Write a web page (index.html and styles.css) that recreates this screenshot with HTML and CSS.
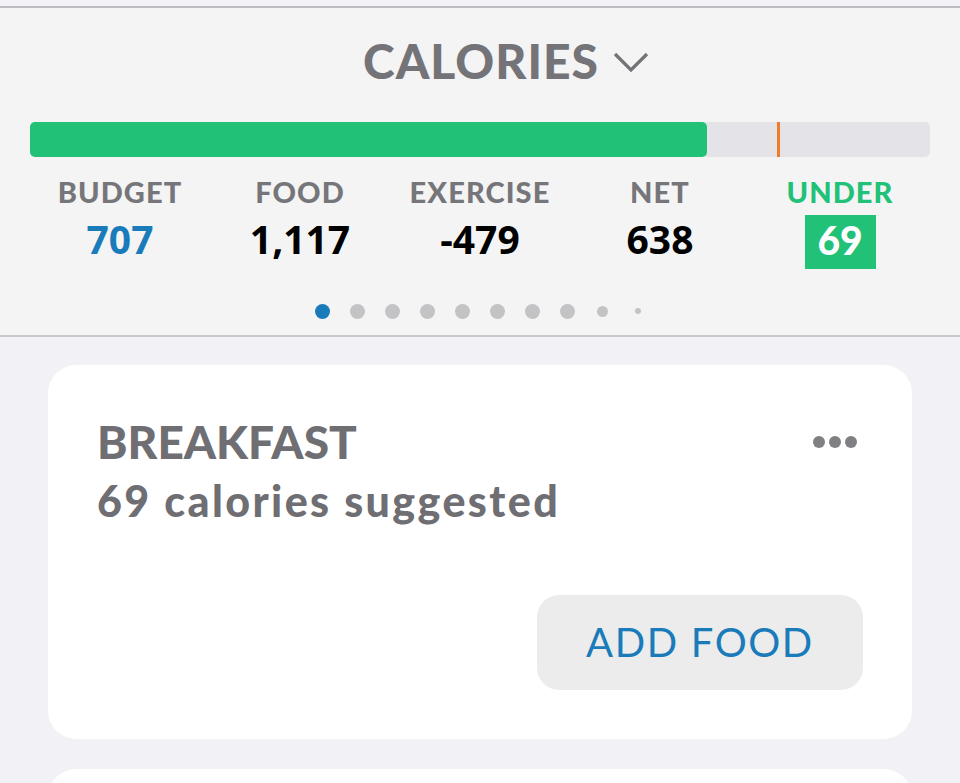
FILE: index.html
```html
<!DOCTYPE html>
<html>
<head>
<meta charset="utf-8">
<link rel="stylesheet" href="styles.css">
</head>
<body>
<div class="page">
  <div class="summary">
    <div class="title">CALORIES
      <svg class="chev" width="36" height="22" viewBox="0 0 36 22"><path d="M2 3 L18 19 L34 3" fill="none" stroke="#737378" stroke-width="3.2"/></svg>
    </div>
    <div class="bar">
      <div class="fill"></div>
      <div class="marker"></div>
    </div>
    <div class="stats">
      <div class="stat"><div class="label">BUDGET</div><div class="value blue">707</div></div>
      <div class="stat"><div class="label">FOOD</div><div class="value">1,117</div></div>
      <div class="stat"><div class="label">EXERCISE</div><div class="value">-479</div></div>
      <div class="stat"><div class="label">NET</div><div class="value">638</div></div>
      <div class="stat"><div class="label green">UNDER</div><div class="value"><span class="badge">69</span></div></div>
    </div>
    <div class="dots">
      <span class="cell"><i class="dot active"></i></span>
      <span class="cell"><i class="dot"></i></span>
      <span class="cell"><i class="dot"></i></span>
      <span class="cell"><i class="dot"></i></span>
      <span class="cell"><i class="dot"></i></span>
      <span class="cell"><i class="dot"></i></span>
      <span class="cell"><i class="dot"></i></span>
      <span class="cell"><i class="dot"></i></span>
      <span class="cell"><i class="dot small"></i></span>
      <span class="cell"><i class="dot tiny"></i></span>
    </div>
  </div>
  <div class="content">
    <div class="card">
      <div class="card-head">
        <div class="meal">BREAKFAST</div>
        <div class="more"><i></i><i></i><i></i></div>
      </div>
      <div class="suggest">69 calories suggested</div>
      <div class="actions"><div class="btn">ADD FOOD</div></div>
    </div>
    <div class="card next"></div>
  </div>
</div>
</body>
</html>
```
FILE: styles.css
```css
html, body { margin: 0; padding: 0; }
body {
  width: 960px;
  height: 783px;
  overflow: hidden;
  background: #f1f1f6;
  font-family: Lato, "Noto Sans", sans-serif;
}
.page { background: #f4f4f4; }
.summary {
  margin-top: 6px;
  border-top: 2px solid #bdbdbf;
  border-bottom: 2px solid #c9c9cd;
  background: #f4f4f4;
  padding: 28px 30px 0;
  height: 331px;
  box-sizing: border-box;
}
.title {
  display: flex;
  justify-content: center;
  align-items: center;
  font-size: 48px;
  line-height: 50px;
  font-weight: 900;
  color: #737378;
  letter-spacing: 1px;
  padding-left: 52px;
}
.chev { margin-left: 14px; margin-top: 2px; }
.bar {
  position: relative;
  margin-top: 36px;
  height: 35px;
  background: #e4e4e8;
  border-radius: 5px;
}
.fill {
  width: 677px;
  height: 100%;
  background: #22c178;
  border-radius: 5px;
}
.marker {
  position: absolute;
  left: 747px;
  top: 0;
  width: 3px;
  height: 100%;
  background: #f07b2a;
}
.stats {
  display: grid;
  grid-template-columns: repeat(5, 1fr);
  margin-top: 17px;
  text-align: center;
}
.label {
  font-size: 29px;
  line-height: 36px;
  font-weight: 900;
  letter-spacing: 1.1px;
  color: #76767a;
}
.label.green { color: #22c178; }
.value {
  margin-top: 5px;
  height: 54px;
  font-family: "Open Sans", sans-serif;
  font-weight: 700;
  font-size: 39px;
  line-height: 48px;
  color: #000;
}
.value.blue { color: #1a7bba; }
.badge {
  display: inline-block;
  width: 71px;
  height: 54px;
  line-height: 50px;
  background: #22c178;
  color: #fff;
  font-family: Lato, sans-serif;
  font-weight: 900;
}
.dots {
  display: flex;
  justify-content: center;
  margin-top: 32px;
  height: 20px;
}
.cell {
  width: 35px;
  display: flex;
  justify-content: center;
  align-items: center;
}
.dot {
  display: block;
  width: 15px;
  height: 15px;
  border-radius: 50%;
  background: #c3c3c5;
}
.dot.active { background: #1a7bba; }
.dot.small { width: 11px; height: 11px; }
.dot.tiny { width: 6px; height: 6px; }
.content {
  background: #f1f1f6;
  padding: 28px 48px 0;
  height: 460px;
}
.card {
  background: #fff;
  border-radius: 28px;
  height: 374px;
  box-sizing: border-box;
  padding: 50px 49px 0 49px;
  display: flex;
  flex-direction: column;
}
.card.next { margin-top: 30px; }
.card-head {
  display: flex;
  justify-content: space-between;
  align-items: center;
}
.meal {
  font-size: 46px;
  line-height: 54px;
  font-weight: 900;
  color: #6e6e73;
}
.more {
  display: flex;
  gap: 4px;
  margin-right: 6px;
  margin-top: 0;
}
.more i {
  display: block;
  width: 12px;
  height: 12px;
  border-radius: 50%;
  background: #808084;
}
.suggest {
  margin-top: 5px;
  font-size: 43px;
  line-height: 54px;
  font-weight: 900;
  letter-spacing: 2.4px;
  color: #6e6e73;
}
.actions {
  display: flex;
  justify-content: flex-end;
  margin-top: 67px;
}
.btn {
  width: 326px;
  height: 95px;
  border-radius: 22px;
  background: #ececec;
  color: #1a7bba;
  font-size: 40px;
  letter-spacing: 1.6px;
  display: flex;
  align-items: center;
  justify-content: center;
  padding-bottom: 2px;
  box-sizing: border-box;
}
```
